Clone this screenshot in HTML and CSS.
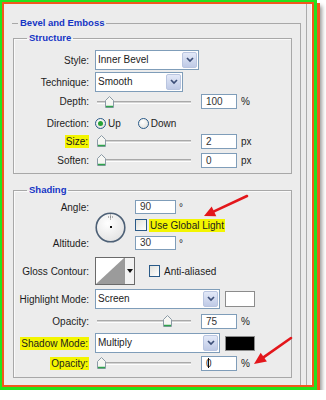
FILE: index.html
```html
<!DOCTYPE html>
<html lang="en">
<head>
    <meta charset="UTF-8">
    <title>Bevel and Emboss</title>
    <link rel="stylesheet" href="styles.css">
</head>
<body>
    <div class="frame">
        <div class="dialog">
            <div class="sheet">
                <div class="panel">
                    <fieldset class="group">
                        <legend class="group-title">Bevel and Emboss</legend>

                        <fieldset class="box structure">
                            <legend class="box-title">Structure</legend>

                            <div class="row r-style">
                                <span class="label">Style:</span>
                                <div class="select w-style">
                                    <span class="select-text">Inner Bevel</span>
                                    <span class="select-btn"><svg width="8" height="6" viewBox="0 0 8 6"><polyline points="1,1 4,4 7,1" fill="none" stroke="#3d4f78" stroke-width="1.7"/></svg></span>
                                </div>
                            </div>

                            <div class="row r-technique">
                                <span class="label">Technique:</span>
                                <div class="select w-technique">
                                    <span class="select-text">Smooth</span>
                                    <span class="select-btn"><svg width="8" height="6" viewBox="0 0 8 6"><polyline points="1,1 4,4 7,1" fill="none" stroke="#3d4f78" stroke-width="1.7"/></svg></span>
                                </div>
                            </div>

                            <div class="row r-depth">
                                <span class="label">Depth:</span>
                                <div class="slider">
                                    <span class="track"></span>
                                    <svg class="thumb" style="left: 10px" width="9" height="12" viewBox="0 0 9 12"><path d="M0.5 4.5 L4.5 0.5 L8.5 4.5 V11.5 H0.5 Z" fill="#f6f6f3" stroke="#8b9aa6"/><path d="M1 10.5 H8" stroke="#2fa34c" stroke-width="1.5"/></svg>
                                </div>
                                <span class="num">100</span>
                                <span class="unit">%</span>
                            </div>

                            <div class="row r-direction">
                                <span class="label">Direction:</span>
                                <span class="radio on"></span>
                                <span class="radio-text">Up</span>
                                <span class="radio down"></span>
                                <span class="radio-text">Down</span>
                            </div>

                            <div class="row r-size">
                                <span class="label"><span class="hl">Size:</span></span>
                                <div class="slider">
                                    <span class="track"></span>
                                    <svg class="thumb" style="left: 2px" width="9" height="12" viewBox="0 0 9 12"><path d="M0.5 4.5 L4.5 0.5 L8.5 4.5 V11.5 H0.5 Z" fill="#f6f6f3" stroke="#8b9aa6"/><path d="M1 10.5 H8" stroke="#2fa34c" stroke-width="1.5"/></svg>
                                </div>
                                <span class="num">2</span>
                                <span class="unit">px</span>
                            </div>

                            <div class="row r-soften">
                                <span class="label">Soften:</span>
                                <div class="slider">
                                    <span class="track"></span>
                                    <svg class="thumb" style="left: 2px" width="9" height="12" viewBox="0 0 9 12"><path d="M0.5 4.5 L4.5 0.5 L8.5 4.5 V11.5 H0.5 Z" fill="#f6f6f3" stroke="#8b9aa6"/><path d="M1 10.5 H8" stroke="#2fa34c" stroke-width="1.5"/></svg>
                                </div>
                                <span class="num">0</span>
                                <span class="unit">px</span>
                            </div>
                        </fieldset>

                        <fieldset class="box shading">
                            <legend class="box-title">Shading</legend>

                            <div class="angle">
                                <span class="label a-angle">Angle:</span>
                                <svg class="dial" width="31" height="31" viewBox="0 0 31 31">
                                    <defs>
                                        <radialGradient id="dialFill" cx="0.4" cy="0.35" r="0.7">
                                            <stop offset="0" stop-color="#ffffff"/>
                                            <stop offset="1" stop-color="#e2e2e2"/>
                                        </radialGradient>
                                    </defs>
                                    <circle cx="15.5" cy="15.5" r="14.3" fill="url(#dialFill)" stroke="#4d6076" stroke-width="1.6"/>
                                    <path d="M15.5 2.5 V7.5 M13 5 H18" stroke="#555" stroke-width="0.8" stroke-dasharray="1 1"/>
                                    <rect x="15" y="14" width="2" height="2" fill="#111"/>
                                </svg>
                                <div class="a-val">
                                    <span class="num short">90</span>
                                    <span class="deg">°</span>
                                </div>
                                <div class="a-check">
                                    <span class="check"></span>
                                    <span class="check-text hl">Use Global Light</span>
                                </div>
                                <span class="label a-altitude">Altitude:</span>
                                <div class="a-alt">
                                    <span class="num short">30</span>
                                    <span class="deg">°</span>
                                </div>
                            </div>

                            <div class="row r-gloss">
                                <span class="label">Gloss Contour:</span>
                                <div class="contour">
                                    <svg class="contour-preview" width="28" height="26" viewBox="0 0 28 26"><path d="M0 26 L28 0 V26 Z" fill="#9b9b9b"/></svg>
                                    <span class="contour-btn"><svg width="6" height="4" viewBox="0 0 6 4"><path d="M0 0 H6 L3 4 Z" fill="#111"/></svg></span>
                                </div>
                                <span class="check aa"></span>
                                <span class="check-text">Anti-aliased</span>
                            </div>

                            <div class="row r-highlight">
                                <span class="label">Highlight Mode:</span>
                                <div class="select w-mode">
                                    <span class="select-text">Screen</span>
                                    <span class="select-btn"><svg width="8" height="6" viewBox="0 0 8 6"><polyline points="1,1 4,4 7,1" fill="none" stroke="#3d4f78" stroke-width="1.7"/></svg></span>
                                </div>
                                <span class="swatch white"></span>
                            </div>

                            <div class="row r-opacity">
                                <span class="label">Opacity:</span>
                                <div class="slider">
                                    <span class="track"></span>
                                    <svg class="thumb" style="left: 68px" width="9" height="12" viewBox="0 0 9 12"><path d="M0.5 4.5 L4.5 0.5 L8.5 4.5 V11.5 H0.5 Z" fill="#f6f6f3" stroke="#8b9aa6"/><path d="M1 10.5 H8" stroke="#2fa34c" stroke-width="1.5"/></svg>
                                </div>
                                <span class="num">75</span>
                                <span class="unit">%</span>
                            </div>

                            <div class="row r-shadow">
                                <span class="label"><span class="hl">Shadow Mode:</span></span>
                                <div class="select w-mode">
                                    <span class="select-text">Multiply</span>
                                    <span class="select-btn"><svg width="8" height="6" viewBox="0 0 8 6"><polyline points="1,1 4,4 7,1" fill="none" stroke="#3d4f78" stroke-width="1.7"/></svg></span>
                                </div>
                                <span class="swatch black"></span>
                            </div>

                            <div class="row r-opacity2">
                                <span class="label"><span class="hl">Opacity:</span></span>
                                <div class="slider">
                                    <span class="track"></span>
                                    <svg class="thumb" style="left: 2px" width="9" height="12" viewBox="0 0 9 12"><path d="M0.5 4.5 L4.5 0.5 L8.5 4.5 V11.5 H0.5 Z" fill="#f6f6f3" stroke="#8b9aa6"/><path d="M1 10.5 H8" stroke="#2fa34c" stroke-width="1.5"/></svg>
                                </div>
                                <span class="num">0<span class="caret"></span></span>
                                <span class="unit">%</span>
                            </div>
                        </fieldset>
                    </fieldset>
                </div>
            </div>
        </div>
    </div>

    <!-- red callout arrows drawn over the dialog -->
    <svg class="arrows" width="326" height="400" viewBox="0 0 326 400">
        <line x1="247" y1="196" x2="214" y2="211.4" stroke="#e3161b" stroke-width="2.6" stroke-linecap="round"/>
        <polygon points="204,216 216.3,216.2 211.7,206.6" fill="#e3161b"/>
        <line x1="291" y1="338" x2="263.8" y2="357.1" stroke="#e3161b" stroke-width="2.6" stroke-linecap="round"/>
        <polygon points="254,364 266.9,361.4 260.7,352.8" fill="#e3161b"/>
    </svg>
</body>
</html>
```

FILE: styles.css
```css
* {
    box-sizing: border-box;
}
body {
    margin: 0;
    background: #fff;
    font-family: "Liberation Sans", Arial, sans-serif;
    font-size: 10px;
    color: #1c1c1c;
}
.frame {
    width: 317px;
    height: 390px;
    border: solid #24e21c;
    border-width: 2px 3px 3px 2px;
    box-shadow: 3px 3px 0 #f2571d, 5px 6px 4px rgba(0,0,0,0.4);
}
.dialog {
    height: 100%;
    border: 2px solid #f2571d;
}
.sheet {
    height: 100%;
    background: #ececec;
    border-right: 1px solid #fbfbfb;
    padding-right: 4px;
}
.panel {
    height: 100%;
    border-right: 1px solid #ababab;
    padding: 13px 0 0 8px;
    display: flex;
    flex-direction: column;
}
.group {
    flex: 1;
    width: 289px;
    min-width: 0;
    margin: 0;
    padding: 3px 0 0 1px;
    border: none;
    border-top: 1px solid #a8a8a8;
    border-right: 1px solid #a8a8a8;
}
.group-title {
    margin-left: 5px;
    padding: 0 2px;
    line-height: 12px;
    font-size: 9.5px;
    font-weight: bold;
    color: #1434c4;
}
.box {
    width: 279px;
    min-width: 0;
    margin: 0;
    border: 1px solid #a8a8a8;
    box-shadow: inset 1px 1px 0 #fafafa;
}
.box-title {
    margin-left: 13px;
    padding: 0 2px;
    line-height: 12px;
    font-size: 9.5px;
    font-weight: bold;
    color: #1434c4;
}
.structure {
    padding: 6px 0 4px 0;
}
.shading {
    margin-top: 10px;
    padding: 4px 0 5px 0;
}
.row {
    display: flex;
    align-items: center;
}
.label {
    width: 75px;
    margin-right: 6px;
    flex-shrink: 0;
    text-align: right;
    white-space: nowrap;
}
.hl {
    background: #f3f500;
    padding: 1px 1px;
}
.r-style, .r-technique {
    height: 20px;
}
.r-technique {
    margin-top: 2px;
}
.r-depth {
    height: 19px;
}
.r-direction {
    height: 18px;
    margin-top: 3px;
}
.r-size {
    height: 18px;
}
.r-soften {
    height: 18px;
    margin-top: 1px;
}

/* selects */
.select {
    display: flex;
    height: 20px;
    border: 1px solid #7f9db9;
    background: #fff;
}
.select-text {
    flex: 1;
    padding-left: 2px;
    line-height: 18px;
}
.select-btn {
    width: 15px;
    margin: 1px;
    border: 1px solid #b9c5e0;
    border-radius: 2px;
    background: linear-gradient(#e3e9f8, #bfcae6);
    display: flex;
    align-items: center;
    justify-content: center;
}
.w-style {
    width: 104px;
}
.w-technique {
    width: 88px;
}
.w-mode {
    width: 125px;
}

/* sliders */
.slider {
    position: relative;
    width: 100px;
    height: 12px;
}
.track {
    position: absolute;
    left: 2px;
    right: 4px;
    top: 5px;
    height: 3px;
    border-top: 1px solid #a9a9a9;
    border-bottom: 1px solid #fdfdfd;
    background: #d4d4d4;
}
.thumb {
    position: absolute;
    top: 0;
}
.num {
    width: 36px;
    height: 15px;
    margin-left: 6px;
    padding-left: 4px;
    border: 1px solid #7f9db9;
    background: #fff;
    line-height: 13px;
    color: #333;
}
.num.short {
    width: 41px;
    height: 14px;
    margin-left: 0;
    line-height: 12px;
}
.caret {
    display: inline-block;
    width: 1px;
    height: 10px;
    margin-left: -4px;
    vertical-align: -1px;
    background: #111;
}
.unit {
    margin-left: 4px;
}
.deg {
    margin-left: 3px;
    vertical-align: 4px;
}

/* radios and checks */
.radio {
    width: 11px;
    height: 11px;
    border-radius: 50%;
    border: 1px solid #2a5a88;
    background: radial-gradient(circle at 40% 35%, #fff, #dcdcd6);
    display: flex;
    align-items: center;
    justify-content: center;
}
.radio.on::after {
    content: "";
    width: 5px;
    height: 5px;
    border-radius: 50%;
    background: #27a236;
}
.radio-text {
    margin-left: 2px;
}
.radio.down {
    margin-left: 17px;
}
.check {
    width: 12px;
    height: 12px;
    flex-shrink: 0;
    border: 1px solid #2a5a88;
    background: linear-gradient(135deg, #e2e2dc, #fff);
}
.check-text {
    margin-left: 2px;
}

/* angle block */
.angle {
    display: grid;
    grid-template-columns: 75px 20px 40px 1fr;
    grid-template-rows: 14px 22px 14px;
    align-items: center;
}
.angle .label {
    grid-column: 1;
    margin-right: 0;
}
.a-angle {
    grid-row: 1;
}
.a-altitude {
    grid-row: 3;
}
.angle .label {
    width: auto;
}
.angle {
    grid-template-columns: 75px 6px 40px 1fr;
}
.dial {
    grid-column: 3;
    grid-row: 1 / span 3;
    align-self: start;
    margin-top: 12px;
}
.a-val {
    grid-column: 4;
    grid-row: 1;
    display: flex;
    align-items: center;
}
.a-check {
    grid-column: 4;
    grid-row: 2;
    display: flex;
    align-items: center;
}
.a-alt {
    grid-column: 4;
    grid-row: 3;
    display: flex;
    align-items: center;
}

/* shading rows */
.r-gloss {
    height: 28px;
    margin-top: 7px;
}
.contour {
    display: flex;
    width: 40px;
    height: 28px;
    border: 1px solid #6a6a6a;
    background: #fff;
}
.contour-btn {
    flex: 1;
    border-left: 1px solid #9a9a9a;
    background: #f2f2f2;
    display: flex;
    align-items: center;
    justify-content: center;
}
.check.aa {
    margin-left: 14px;
    width: 11px;
    height: 12px;
}
.r-gloss .check-text {
    margin-left: 4px;
}
.r-highlight {
    height: 20px;
    margin-top: 4px;
}
.r-opacity {
    height: 18px;
    margin-top: 3px;
}
.r-shadow {
    height: 20px;
    margin-top: 3px;
}
.r-opacity2 {
    height: 18px;
    margin-top: 1px;
}
.swatch {
    width: 30px;
    height: 16px;
    margin-left: 5px;
    border: 1px solid #8c8c8c;
}
.swatch.white {
    background: #fff;
}
.swatch.black {
    height: 15px;
    background: #000;
}
.arrows {
    position: absolute;
    left: 0;
    top: 0;
    pointer-events: none;
}
```
